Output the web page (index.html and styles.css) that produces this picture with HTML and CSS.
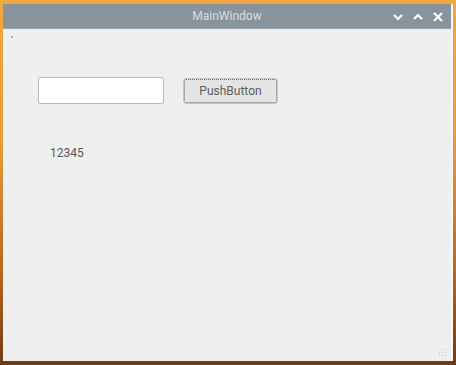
FILE: index.html
```html
<!DOCTYPE html>
<html lang="en">
  <head>
    <meta charset="UTF-8" />
    <meta name="viewport" content="width=device-width, initial-scale=1.0" />
    <title>MainWindow</title>
    <link rel="stylesheet" href="styles.css">
  </head>
  <body>
    <div class="window">
      <header class="title_bar">
        <span class="title">MainWindow</span>
        <div class="controls">
          <svg width="12" height="12" viewBox="0 0 12 12"><path d="M2 4 L6 8 L10 4" /></svg>
          <svg width="12" height="12" viewBox="0 0 12 12"><path d="M2 8 L6 4 L10 8" /></svg>
          <svg width="12" height="12" viewBox="0 0 12 12"><path d="M2 2 L10 10 M10 2 L2 10" /></svg>
        </div>
      </header>
      <main class="content">
        <span class="dot"></span>
        <div class="form_row">
          <input type="text" class="line_edit" />
          <button class="push_btn">PushButton</button>
        </div>
        <div class="label">12345</div>
        <span class="grip"></span>
      </main>
    </div>
  </body>
</html>
```
FILE: styles.css
```css
* {
  margin: 0;
  padding: 0;
  box-sizing: border-box;
}
body {
  width: 456px;
  height: 365px;
  overflow: hidden;
  padding: 4px 3px 0 3px;
  font-family: Roboto, 'Liberation Sans', sans-serif;
  background: linear-gradient(to bottom, #f2a742 0%, #e89a3a 40%, #b8661f 75%, #6e3a14 100%);
}
.window {
  width: 450px;
  height: 357px;
  display: flex;
  flex-direction: column;
  background-color: #efefef;
  border-right: 2px solid #f6f8fa;
}
.title_bar {
  height: 25px;
  flex-shrink: 0;
  position: relative;
  display: flex;
  align-items: center;
  justify-content: center;
  background-color: #87949b;
  border-bottom: 1px solid #9aa5ab;
}
.title {
  font-size: 12px;
  color: #d8dde0;
}
.controls {
  position: absolute;
  right: 7px;
  top: 7px;
  display: flex;
  gap: 8px;

  & svg path {
    fill: none;
    stroke: #ffffff;
    stroke-width: 2.2;
  }
}
.content {
  flex: 1;
  position: relative;
  padding: 48px 0 0 35px;
}
.dot {
  position: absolute;
  left: 8px;
  top: 7px;
  width: 2px;
  height: 2px;
  background-color: #b0b0b0;
}
.form_row {
  display: flex;
  align-items: center;
  gap: 20px;
}
.line_edit {
  width: 126px;
  height: 27px;
  background-color: white;
  border: 1px solid #b9b9b9;
  border-radius: 2px;
  outline: none;
}
.push_btn {
  width: 93px;
  height: 24px;
  background-color: #e4e4e4;
  border: 1px dotted #6c6c6c;
  outline: 1px solid #c4c4c4;
  outline-offset: 0;
  border-radius: 2px;
  font-family: inherit;
  font-size: 12px;
  color: #5e5e5e;
}
.label {
  margin: 42px 0 0 12px;
  font-size: 12px;
  color: #585858;
}
.grip {
  position: absolute;
  right: 3px;
  bottom: 3px;
  width: 10px;
  height: 10px;
  background-image: radial-gradient(circle, #c8c8c8 1px, transparent 1px);
  background-size: 3px 3px;
}
```
